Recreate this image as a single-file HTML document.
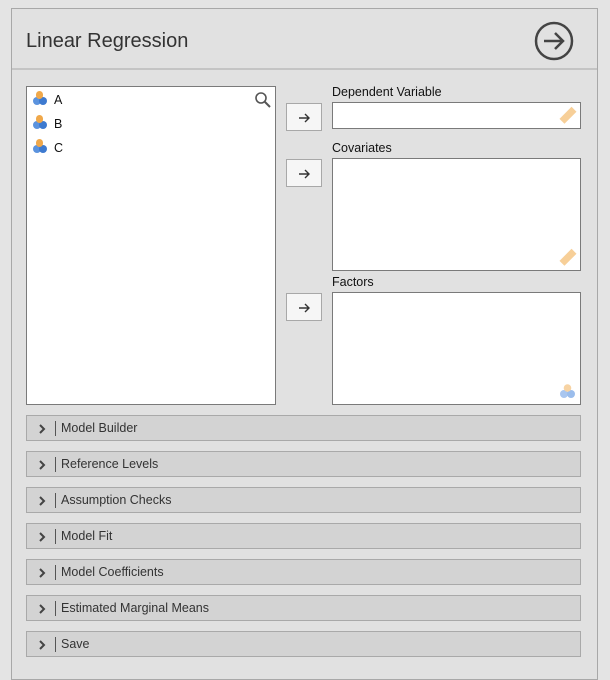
<!DOCTYPE html>
<html><head><style>
body{margin:0;width:610px;height:680px;background:#e4e4e4;font-family:"Liberation Sans",sans-serif;position:relative;overflow:hidden}
.panel{position:absolute;left:11px;top:8px;width:585px;height:670px;border:1px solid #a8a8a8;background:#e1e1e1}
.abs{position:absolute}
.title{left:26px;top:30px;font-size:20px;color:#333}
.hline{left:12px;top:68px;width:585px;height:2px;background:#c4c4c4}
.box{position:absolute;background:#fff;border:1px solid #7a7a7a;box-sizing:border-box}
.btn{position:absolute;left:286px;width:36px;height:28px;background:#f6f6f6;border:1px solid #a8a8a8;box-sizing:border-box}
.btn svg{position:absolute;left:11px;top:8px}
.lbl{position:absolute;left:332px;font-size:12.5px;color:#111}
.var{position:absolute;left:54px;font-size:12.5px;color:#111}
.sec{position:absolute;left:26px;width:555px;height:26px;background:#d3d3d3;border:1px solid #a9a9a9;box-sizing:border-box;font-size:12.5px;color:#333}
.sec svg{position:absolute;left:12px;top:8px}
.sec span.b{position:absolute;left:28px;top:5px;width:1px;height:15px;background:#555}
.sec span.t{position:absolute;left:34px;top:5px}
</style></head><body>
<div class="panel"></div>
<div class="abs title">Linear Regression</div>
<svg class="abs" style="left:533px;top:21px" width="42" height="42" viewBox="0 0 42 42"><circle cx="21" cy="20" r="18" fill="none" stroke="#444" stroke-width="2.5"/><path d="M11 20H30M22 12L30 20L22 28" fill="none" stroke="#444" stroke-width="2.5"/></svg>
<div class="abs hline"></div>
<div class="box" style="left:26px;top:86px;width:250px;height:319px"></div>
<svg class="abs" style="left:254px;top:91px" width="18" height="18"><circle cx="7" cy="7" r="5" fill="none" stroke="#555" stroke-width="1.6"/><path d="M11 11L16 16" stroke="#555" stroke-width="2"/></svg>
<svg width="0" height="0"><defs><g id="nom"><circle cx="5" cy="11" r="4" fill="#5b93de"/><circle cx="11" cy="11" r="4" fill="#3d7ad0"/><rect x="4" y="1" width="7" height="8" rx="3.5" fill="#f0a84a"/></g>
<g id="arr"><path d="M1 6H11M7 2L11 6L7 10" fill="none" stroke="#333" stroke-width="1.4"/></g>
<g id="chv"><path d="M1 1L5 5L1 9" fill="none" stroke="#444" stroke-width="2"/></g></defs></svg>
<svg class="abs" style="left:32px;top:90px" width="17" height="16"><use href="#nom"/></svg>
<div class="var" style="top:93px">A</div>
<svg class="abs" style="left:32px;top:114px" width="17" height="16"><use href="#nom"/></svg>
<div class="var" style="top:117px">B</div>
<svg class="abs" style="left:32px;top:138px" width="17" height="16"><use href="#nom"/></svg>
<div class="var" style="top:141px">C</div>
<div class="btn" style="top:103px"><svg width="13" height="12"><use href="#arr"/></svg></div>
<div class="btn" style="top:159px"><svg width="13" height="12"><use href="#arr"/></svg></div>
<div class="btn" style="top:293px"><svg width="13" height="12"><use href="#arr"/></svg></div>
<div class="lbl" style="top:85px">Dependent Variable</div>
<div class="box" style="left:332px;top:102px;width:249px;height:27px"></div>
<div class="lbl" style="top:141px">Covariates</div>
<div class="box" style="left:332px;top:158px;width:249px;height:113px"></div>
<div class="lbl" style="top:275px">Factors</div>
<div class="box" style="left:332px;top:292px;width:249px;height:113px"></div>
<svg class="abs" style="left:558px;top:106px" width="20" height="20"><rect x="6" y="1" width="7" height="17" fill="#f7cf98" transform="rotate(45 10 10)"/></svg>
<svg class="abs" style="left:558px;top:248px" width="20" height="20"><rect x="6" y="1" width="7" height="17" fill="#f7cf98" transform="rotate(45 10 10)"/></svg>
<svg class="abs" style="left:559px;top:383px" width="18" height="18"><circle cx="5" cy="11" r="4" fill="#a9c6ef"/><circle cx="12" cy="11" r="4" fill="#9bbdec"/><circle cx="8.5" cy="5" r="3.8" fill="#f7d3a3"/></svg>
<div class="sec" style="top:415px"><svg width="7" height="10"><use href="#chv"/></svg><span class="b"></span><span class="t">Model Builder</span></div>
<div class="sec" style="top:451px"><svg width="7" height="10"><use href="#chv"/></svg><span class="b"></span><span class="t">Reference Levels</span></div>
<div class="sec" style="top:487px"><svg width="7" height="10"><use href="#chv"/></svg><span class="b"></span><span class="t">Assumption Checks</span></div>
<div class="sec" style="top:523px"><svg width="7" height="10"><use href="#chv"/></svg><span class="b"></span><span class="t">Model Fit</span></div>
<div class="sec" style="top:559px"><svg width="7" height="10"><use href="#chv"/></svg><span class="b"></span><span class="t">Model Coefficients</span></div>
<div class="sec" style="top:595px"><svg width="7" height="10"><use href="#chv"/></svg><span class="b"></span><span class="t">Estimated Marginal Means</span></div>
<div class="sec" style="top:631px"><svg width="7" height="10"><use href="#chv"/></svg><span class="b"></span><span class="t">Save</span></div>
</body></html>
